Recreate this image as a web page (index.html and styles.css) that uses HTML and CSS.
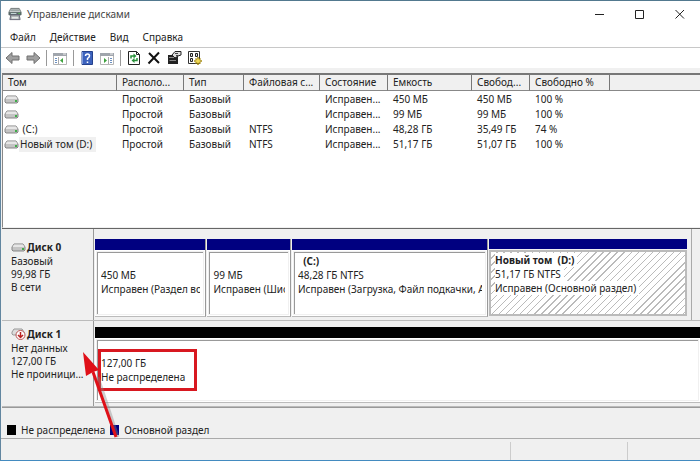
FILE: index.html
```html
<!DOCTYPE html>
<html lang="ru">
<head>
<meta charset="utf-8">
<title>Управление дисками</title>
<link rel="stylesheet" href="styles.css">
</head>
<body>
<svg class="defs" aria-hidden="true">
  <symbol id="drive" viewBox="0 0 15 9">
    <path d="M3 1H12L14 4V7L13 8H2L1 7V4Z" fill="#c4c4c4" stroke="#858585"/>
    <path d="M3 1.500H12L13.500 4H1.500Z" fill="#e6e6e6"/>
    <rect x="11" y="5" width="2" height="2" fill="#3fae49"/>
  </symbol>
</svg>
<div class="window">
  <header class="titlebar">
    <svg class="app-icon" viewBox="0 0 15 14" aria-hidden="true">
      <path d="M3 1H12L14 5V8H1V5Z" fill="#d5d8d8" stroke="#6c7474"/>
      <path d="M3 2H12L13 4H2Z" fill="#9da7a7"/>
      <rect x="1" y="5" width="13" height="3" fill="#566"/>
      <rect x="3" y="6" width="6" height="1" fill="#cdd"/>
      <path d="M3 8H12L13 13H2Z" fill="#a5adad" stroke="#667"/>
      <rect x="4" y="10" width="7" height="2" fill="#e5e8e8"/>
      <rect x="11" y="6" width="2" height="1" fill="#5b5"/>
    </svg>
    <h1 class="title">Управление дисками</h1>
    <div class="controls">
      <button class="control" aria-label="Свернуть"><svg viewBox="0 0 10 10"><path d="M0 5.500H9" /></svg></button>
      <button class="control" aria-label="Развернуть"><svg viewBox="0 0 10 10"><path d="M.5 1.500H8.500V9.500H.5Z"/></svg></button>
      <button class="control" aria-label="Закрыть"><svg viewBox="0 0 10 10"><path d="M.5 1L9 9.500M9 1L.5 9.500"/></svg></button>
    </div>
  </header>
  <nav class="menu">
    <button>Файл</button><button>Действие</button><button>Вид</button><button>Справка</button>
  </nav>
  <div class="toolbar">
    <button aria-label="Назад"><svg viewBox="0 0 16 16"><path d="M1 8L7 2.500V6H14V10H7V13.500Z" fill="#a0a0a0" stroke="#707070"/></svg></button>
    <button aria-label="Вперёд"><svg viewBox="0 0 16 16"><path d="M15 8L9 2.500V6H2V10H9V13.500Z" fill="#a0a0a0" stroke="#707070"/></svg></button>
    <span class="separator"></span>
    <button aria-label="Дерево консоли"><svg viewBox="0 0 16 16"><path d="M1.500 3.500H14.500V14.500H1.500Z" fill="#fff" stroke="#b5b5b5"/><path d="M1 3H15V6H1Z" fill="#a0a5ac"/><path d="M11 4H14" stroke="#eee"/><path d="M6.500 7V14" stroke="#aaa"/><path d="M3 8.500H5M3 10.500H5M3 12.500H5" stroke="#6b8fc0"/><path d="M11 8V13L8 10.500Z" fill="#3da23d"/></svg></button>
    <span class="separator"></span>
    <button aria-label="Справка"><svg viewBox="0 0 16 16"><path d="M3 1.500H13.500V14.500H3Z" fill="#3c62bd" stroke="#24418c"/><path d="M3.500 2V14" stroke="#7c99dc"/><path d="M6.500 6Q6.500 4 8.500 4T10.500 6Q10.500 7 8.500 8.500V10M8.500 11.500V13" fill="none" stroke="#fff" stroke-width="1.500"/></svg></button>
    <button aria-label="Область действий"><svg viewBox="0 0 16 16"><path d="M1.500 3.500H14.500V14.500H1.500Z" fill="#fff" stroke="#b5b5b5"/><path d="M1 3H15V6H1Z" fill="#a0a5ac"/><path d="M11 4H14" stroke="#eee"/><path d="M9.500 7V14" stroke="#aaa"/><path d="M11 8.500H13M11 10.500H13M11 12.500H13" stroke="#6b8fc0"/><path d="M5 8V13L8 10.500Z" fill="#3da23d"/></svg></button>
    <span class="separator"></span>
    <button aria-label="Обновить"><svg viewBox="0 0 16 16"><path d="M2.500 1.500H10.500L13.500 4.500V14.500H2.500Z" fill="#fff" stroke="#222"/><path d="M10.500 1.500V4.500H13.500" fill="none" stroke="#222"/><path d="M5 8.500V6H8M11 8V10.500H8" fill="none" stroke="#28913a" stroke-width="1.500"/><path d="M7.500 3.500L10.500 6L7.500 8.500ZM8.500 8L5.500 10.500L8.500 13Z" fill="#28913a"/></svg></button>
    <button aria-label="Удалить"><svg viewBox="0 0 16 16"><path d="M3 3L13 13M13 2.500L2.500 13.500" stroke="#111" stroke-width="2"/></svg></button>
    <button aria-label="Свойства"><svg viewBox="0 0 16 16"><path d="M2 5H12V14H2Z" fill="#222"/><path d="M3 7.500H8M3.500 10.500H10" stroke="#888"/><path d="M6 5L9 1.500H15V5L12 6L9 8Z" fill="#ddd" stroke="#222"/><path d="M9 3.500H12M10 5.500H12" stroke="#444"/></svg></button>
    <button aria-label="Настройка"><svg viewBox="0 0 16 16"><path d="M2.500 1.500H13.500V13.500H2.500Z" fill="#fff" stroke="#333"/><path d="M4.500 3.500H6.500V6.500H4.500ZM4.500 8.500H6.500V11.500H4.500ZM9.500 3.500H11.500V6.500H9.500Z" fill="#ddd" stroke="#222"/><path d="M12 7V15M8 11H16M9.500 8.500L14.500 13.500M14.500 8.500L9.500 13.500" stroke="#a58a10" stroke-width="1.500"/><circle cx="12" cy="11" r="2" fill="#f0d855"/></svg></button>
  </div>
  <main class="content">
    <section class="volumes">
      <table>
        <colgroup><col class="c-volume"><col class="c-layout"><col class="c-type"><col class="c-fs"><col class="c-state"><col class="c-size"><col class="c-free"><col class="c-percent"><col></colgroup>
        <thead><tr><th>Том</th><th>Располо...</th><th>Тип</th><th>Файловая с...</th><th>Состояние</th><th>Емкость</th><th>Свобод...</th><th>Свободно %</th><th></th></tr></thead>
        <tbody>
          <tr><td><svg class="drive"><use href="#drive"/></svg></td><td>Простой</td><td>Базовый</td><td></td><td>Исправен...</td><td>450 МБ</td><td>450 МБ</td><td>100 %</td><td></td></tr>
          <tr><td><svg class="drive"><use href="#drive"/></svg></td><td>Простой</td><td>Базовый</td><td></td><td>Исправен...</td><td>99 МБ</td><td>99 МБ</td><td>100 %</td><td></td></tr>
          <tr><td><svg class="drive"><use href="#drive"/></svg><span class="name">&nbsp;(C:)</span></td><td>Простой</td><td>Базовый</td><td>NTFS</td><td>Исправен...</td><td>48,28 ГБ</td><td>35,49 ГБ</td><td>74 %</td><td></td></tr>
          <tr><td><svg class="drive"><use href="#drive"/></svg><span class="name selected">Новый том (D:)</span></td><td>Простой</td><td>Базовый</td><td>NTFS</td><td>Исправен...</td><td>51,17 ГБ</td><td>51,07 ГБ</td><td>100 %</td><td></td></tr>
        </tbody>
      </table>
    </section>
    <section class="disks">
      <article class="disk">
        <div class="disk-label">
          <h2><svg class="drive"><use href="#drive"/></svg>Диск 0</h2>
          <p>Базовый</p><p>99,98 ГБ</p><p>В сети</p>
        </div>
        <div class="partitions framed">
          <div class="partition recovery"><div class="volume"><strong>&nbsp;</strong><p>450 МБ</p><p>Исправен (Раздел восстановления)</p></div></div>
          <div class="partition efi"><div class="volume"><strong>&nbsp;</strong><p>99 МБ</p><p>Исправен (Шифрованный)</p></div></div>
          <div class="partition system"><div class="volume"><strong>&nbsp; (C:)</strong><p>48,28 ГБ NTFS</p><p>Исправен (Загрузка, Файл подкачки, Аварийный дамп)</p></div></div>
          <div class="partition data active"><div class="volume"><strong>Новый том&nbsp; (D:)</strong><p>51,17 ГБ NTFS</p><p>Исправен (Основной раздел)</p></div></div>
        </div>
      </article>
      <article class="disk">
        <div class="disk-label">
          <h2><svg class="drive offline" viewBox="0 0 15 12"><path d="M3 1H11L13 4V7H2L1 6V4Z" fill="#ddd" stroke="#999"/><circle cx="9.500" cy="7" r="4.500" fill="#fff" stroke="#b55"/><path d="M9.500 4V9M7 7L9.500 9.500L12 7" fill="none" stroke="#b22" stroke-width="1.500"/></svg>Диск 1</h2>
          <p>Нет данных</p><p>127,00 ГБ</p><p>Не проиници...</p>
        </div>
        <div class="partitions">
          <div class="partition unallocated"><div class="volume"><strong>&nbsp;</strong><p>127,00 ГБ</p><p>Не распределена</p><span class="highlight"></span></div></div>
        </div>
        <svg class="pointer" viewBox="0 0 44 90" aria-hidden="true"><path d="M16 26L36 86" stroke="#8886" stroke-width="3"/><path d="M11 21L34 86" stroke="#df1018" stroke-width="3"/><path d="M1 1L17 19L11 21L4 25Z" fill="#df1018"/></svg>
      </article>
    </section>
    <footer class="legend"><span class="swatch black"></span><span>Не распределена</span><span class="swatch navy"></span><span>Основной раздел</span></footer>
  </main>
  <div class="status"><span></span><span></span><span></span></div>
</div>
</body>
</html>
```
FILE: styles.css
```css
* { box-sizing: border-box; }
body { margin: 0; font: 10px/15px "Noto Sans", "Open Sans", sans-serif; color: #222; }
p, h1, h2 { margin: 0; font-size: inherit; font-weight: normal; }
button { font: inherit; color: inherit; border: 0; padding: 0; background: none; }
.defs { position: absolute; width: 0; height: 0; }
.window {
  display: flex; flex-direction: column; min-height: 100vh;
  background: #f0f0f0;
  border-top: 1px solid #52798f; border-left: 1px solid #6286a0; border-bottom: 1px solid #438bc0;
}
.titlebar { display: flex; align-items: center; height: 26px; padding-left: 7px; background: #fff; }
.app-icon { width: 14px; height: 14px; margin-right: 5px; }
.title { flex: 1; color: #444; }
.controls { display: flex; }
.control { width: 40px; height: 24px; display: flex; align-items: center; justify-content: center; }
.control svg { width: 10px; height: 10px; fill: none; stroke: #222; }
.menu { display: flex; align-items: center; gap: 14px; height: 20px; padding-left: 9px; background: #fff; }
.toolbar { display: flex; align-items: center; gap: 4px; height: 21px; padding-left: 4px; background: #fff; border-top: 1px solid #c8c8c8; }
.toolbar button { width: 16px; height: 16px; }
.toolbar svg { display: block; width: 16px; height: 16px; }
.separator { width: 1px; height: 16px; margin: 0 1px; background: #999; }
.content { display: flex; flex-direction: column; margin-top: 5px; margin-left: 1px; }
.volumes { height: 155px; background: #fff; border-top: 2px solid #777; border-left: 1px solid #888; border-bottom: 1px solid #f0f0f0; }
table { width: 100%; table-layout: fixed; border-collapse: separate; border-spacing: 0; }
th, td { height: 15px; padding: 0 0 0 5px; text-align: left; font-weight: normal; line-height: 15px; white-space: nowrap; overflow: hidden; }
th { height: 16px; background: #f0f0f0; border-right: 1px solid #777; border-bottom: 1px solid #888; }
th:last-child { border-right: 0; }
td:first-child { padding-left: 1px; }
tbody::before { content: ""; display: block; height: 1px; }
.c-volume { width: 114px; } .c-layout { width: 67px; } .c-type { width: 60px; } .c-fs { width: 76px; }
.c-state { width: 68px; } .c-size { width: 84px; } .c-free { width: 58px; } .c-percent { width: 80px; }
.drive { width: 15px; height: 9px; }
td .drive { vertical-align: -1px; }
.name { display: inline-block; padding: 0 4px 0 1px; }
.selected { background: #f0f0f0; }
.disks { border-top: 1px solid #666; border-bottom: 1px solid #999; }
.disk { position: relative; display: flex; height: 92px; border-bottom: 1px solid #bbb; }
.disk + .disk { height: 86px; }
.disk-label { width: 92px; flex: none; padding: 11px 0 0 9px; line-height: 13px; border-right: 1px solid #999; white-space: nowrap; }
.disk + .disk .disk-label { padding-top: 6px; }
.disk-label h2 { display: flex; align-items: center; gap: 1px; height: 14px; margin-bottom: 1px; font-weight: bold; }
.offline { height: 12px; }
.partitions { flex: 1; min-width: 0; display: flex; padding: 6px 0 3px 1px; }
.framed { margin-right: 8px; padding: 10px 4px 3px 1px; border-right: 1px solid #aaa; }
.partition { flex: 1 1 0; min-width: 0; display: flex; flex-direction: column; border-right: 1px solid #999; border-bottom: 1px solid #bbb; margin-right: 1px; background: #fff; }
.partition::before { content: ""; height: 11px; background: #000080; }
.recovery { flex-grow: 111; } .efi { flex-grow: 83; } .system { flex-grow: 196; } .data { flex-grow: 199; }
.data { border-right: 0; margin-right: 0; }
.unallocated { margin: 0; border-right: 0; }
.unallocated::before { background: #000; }
.volume { flex: 1; position: relative; margin: 2px; padding: 1px 3px 0 3px; border-top: 1px solid #999; border-left: 1px solid #999; line-height: 14px; background: #fff; white-space: nowrap; outline: 1px solid #f0f0f0; }
.volume strong { display: block; }
.volume p { overflow: hidden; }
.active .volume { margin: 0; padding: 1px 5px 0 4px; border: 2px solid #bbb; background: repeating-linear-gradient(135deg, #fff 0 4px, #bbb 4px 5px); }
.active strong, .active p { width: fit-content; background: #fff; padding-right: 3px; }
.highlight { position: absolute; left: 0; top: 8px; width: 99px; height: 42px; border: 3px solid #d81820; }
.pointer { position: absolute; left: 80px; top: 30px; width: 44px; height: 90px; z-index: 2; }
.legend { display: flex; align-items: center; gap: 5px; height: 30px; padding: 14px 0 0 5px; }
.swatch { width: 9px; height: 10px; }
.black { background: #000; } .navy { background: #000080; }
.status { flex: 1; display: flex; border-top: 1px solid #aaa; padding-top: 3px; }
.status span { width: 73px; border-left: 1px solid #ccc; }
.status span:first-child { flex: 1; border: 0; }
.status span:nth-child(2) { width: 117px; }
```
